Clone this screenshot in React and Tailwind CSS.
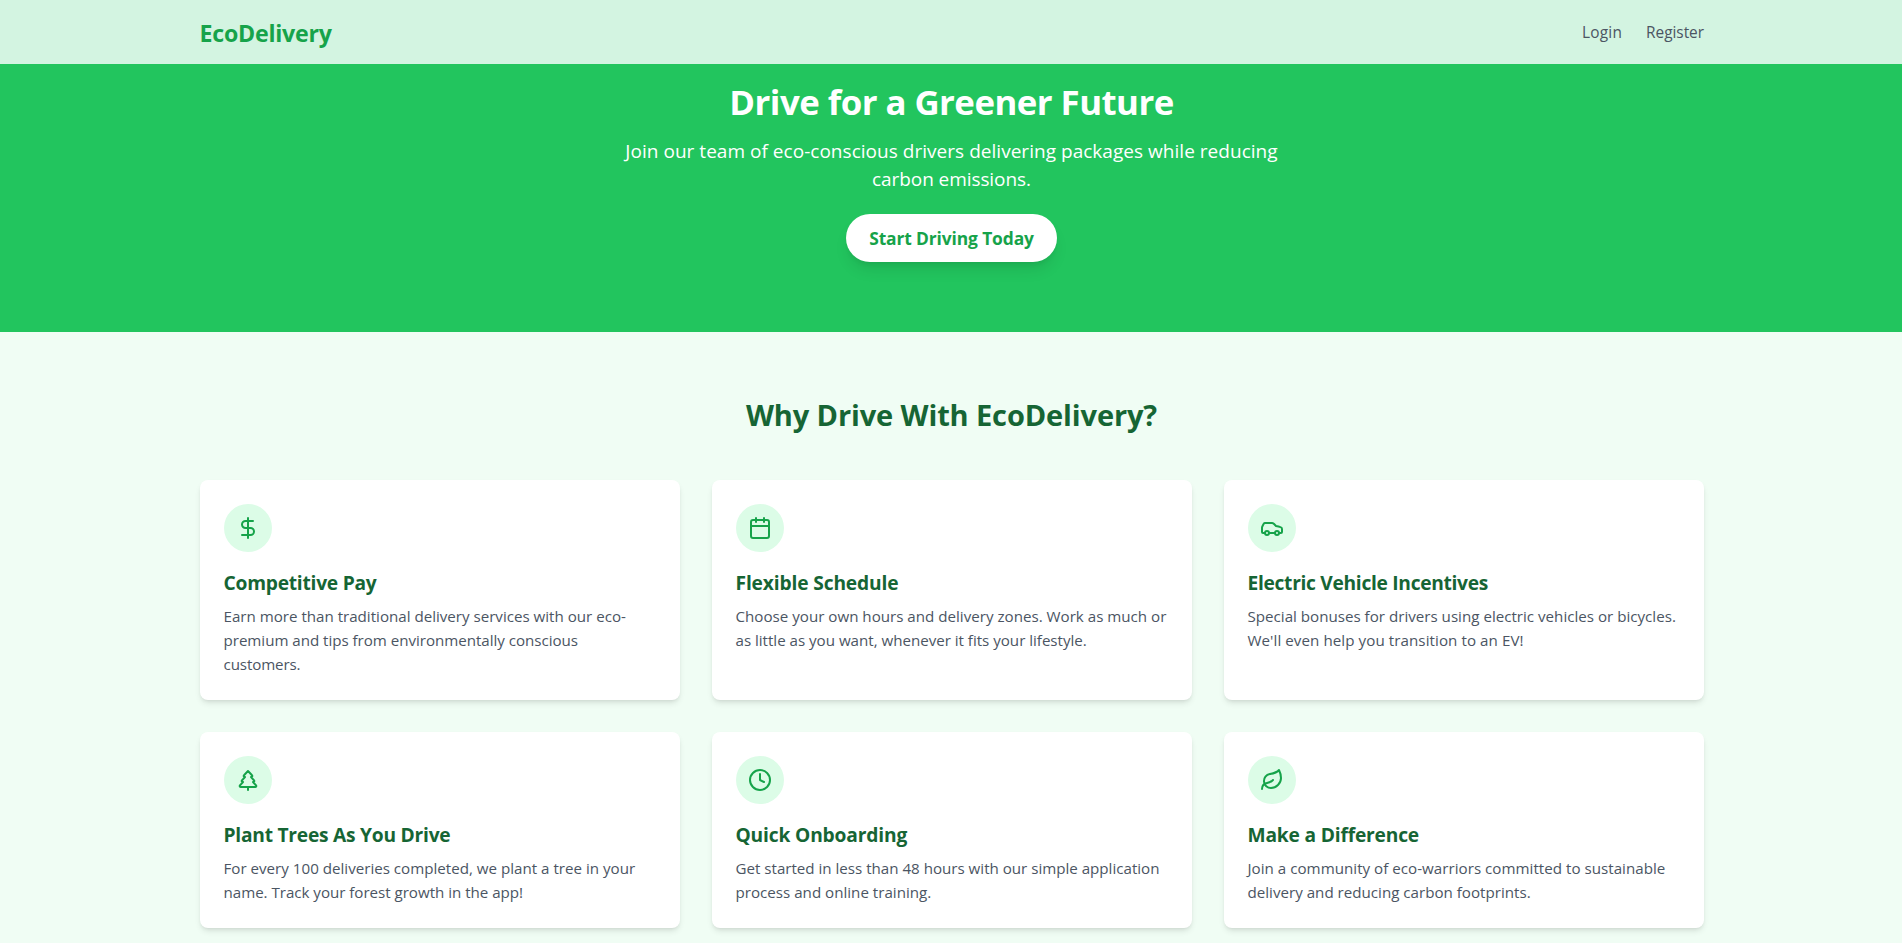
import React from 'react';
import { Calendar, Car, Clock, DollarSign, Leaf, TreePine } from 'lucide-react';

const features = [
  {
    icon: <DollarSign />,
    title: 'Competitive Pay',
    titleClass: 'tracking-[-0.24px]',
    lines: [
      ['Earn more than traditional delivery services with our eco-', 'tracking-[-0.01px]'],
      ['premium and tips from environmentally conscious', 'tracking-[-0.03px]'],
      ['customers.', 'tracking-[-0.12px]'],
    ],
  },
  {
    icon: <Calendar />,
    title: 'Flexible Schedule',
    titleClass: 'tracking-[-0.14px]',
    lines: [
      ['Choose your own hours and delivery zones. Work as much or'],
      ['as little as you want, whenever it fits your lifestyle.', 'tracking-[-0.02px]'],
    ],
  },
  {
    icon: <Car />,
    title: 'Electric Vehicle Incentives',
    titleClass: 'tracking-[-0.3px]',
    lines: [
      ['Special bonuses for drivers using electric vehicles or bicycles.'],
      ["We'll even help you transition to an EV!", 'tracking-[0.07px]'],
    ],
  },
  {
    icon: <TreePine />,
    title: 'Plant Trees As You Drive',
    titleClass: 'tracking-[-0.24px]',
    lines: [
      ['For every 100 deliveries completed, we plant a tree in your'],
      ['name. Track your forest growth in the app!', 'tracking-[-0.03px]'],
    ],
  },
  {
    icon: <Clock />,
    title: 'Quick Onboarding',
    titleClass: 'tracking-[-0.16px]',
    lines: [
      ['Get started in less than 48 hours with our simple application', 'tracking-[-0.01px]'],
      ['process and online training.'],
    ],
  },
  {
    icon: <Leaf />,
    title: 'Make a Difference',
    titleClass: 'tracking-[-0.18px]',
    lines: [
      ['Join a community of eco-warriors committed to sustainable', 'tracking-[0.02px]'],
      ['delivery and reducing carbon footprints.'],
    ],
  },
];

function FeatureCard({ icon, title, titleClass, lines }) {
  return (
    <div className="rounded-lg bg-white p-6 shadow-md">
      <div className="mb-4 flex size-12 items-center justify-center rounded-full bg-[#dcfce7] text-[#16a34a]">{icon}</div>
      <h3 className={`mb-[7px] -ml-[0.5px] pt-px text-[19.2px] leading-7 font-bold text-[#166534] ${titleClass}`}>{title}</h3>
      <p className="-ml-[0.5px] text-[15.15px] leading-6 whitespace-nowrap text-[#4b5563]">
        {lines.map(([text, tracking]) => (
          <span key={text} className={`block ${tracking ?? ''}`}>{text}</span>
        ))}
      </p>
    </div>
  );
}

export default function App() {
  return (
    <div className="h-[943px] overflow-hidden bg-[#f0fdf4] font-['Open_Sans','Noto_Sans',sans-serif]">
      <header className="h-16 bg-[#d3f4e1]">
        <div className="ml-[200px] flex h-full w-[1504px] items-center justify-between pt-0.5">
          <a href="#" className="-ml-[0.5px] text-[23.2px] leading-8 font-bold tracking-[-0.25px] text-[#16a34a]">EcoDelivery</a>
          <nav className="flex gap-6 text-[15.4px] leading-6 text-[#4b5563]">
            <a href="#" className="tracking-[0.2px]">Login</a>
            <a href="#" className="tracking-[-0.03px]">Register</a>
          </nav>
        </div>
      </header>
      <section className="flex h-[268px] flex-col items-center bg-[#22c55e] pt-[18px] pl-px text-center text-white">
        <h1 className="mb-[15px] text-[34.8px] leading-10 font-bold tracking-[-0.53px]">Drive for a Greener Future</h1>
        <p className="mb-[21px] text-[19px] leading-7">
          <span className="block tracking-[0.03px]">Join our team of eco-conscious drivers delivering packages while reducing</span>
          <span className="block tracking-[-0.08px]">carbon emissions.</span>
        </p>
        <a href="#" className="flex h-12 w-[211px] items-center justify-center rounded-full bg-white text-[17.4px] leading-7 font-bold tracking-[-0.12px] text-[#16a34a] shadow-lg">
          Start Driving Today
        </a>
      </section>
      <section className="pt-[65px]">
        <h2 className="mb-[47px] pl-px text-center text-[29px] leading-9 font-bold tracking-[-0.12px] text-[#166534]">Why Drive With EcoDelivery?</h2>
        <div className="ml-[200px] grid w-[1504px] grid-cols-3 gap-8">
          {features.map((feature) => (
            <FeatureCard key={feature.title} {...feature} />
          ))}
        </div>
      </section>
    </div>
  );
}
